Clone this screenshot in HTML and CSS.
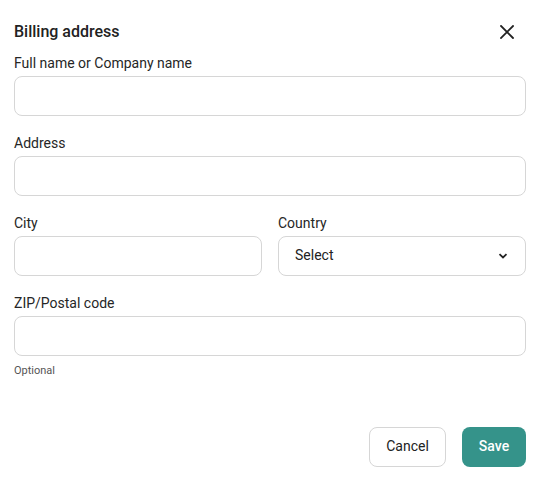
FILE: index.html
```html
<!DOCTYPE html>
<html>
<head>
<meta charset="utf-8">
<link rel="stylesheet" href="styles.css">
</head>
<body>
<div class="dialog">
  <div class="header">
    <h1 class="title">Billing address</h1>
    <button class="close" aria-label="Close">
      <svg width="14" height="14" viewBox="0 0 14 14"><path d="M1 1L13 13M13 1L1 13" stroke="#222" stroke-width="1.8" stroke-linecap="square"/></svg>
    </button>
  </div>
  <div class="form">
    <div class="field">
      <label class="label">Full name or Company name</label>
      <div class="input"></div>
    </div>
    <div class="field">
      <label class="label">Address</label>
      <div class="input"></div>
    </div>
    <div class="row">
      <div class="field">
        <label class="label">City</label>
        <div class="input"></div>
      </div>
      <div class="field">
        <label class="label">Country</label>
        <div class="input select">
          <span>Select</span>
          <svg width="10" height="6" viewBox="0 0 10 6"><path d="M1.5 1.2L5 4.5L8.5 1.2" fill="none" stroke="#222" stroke-width="1.8"/></svg>
        </div>
      </div>
    </div>
    <div class="field">
      <label class="label">ZIP/Postal code</label>
      <div class="input"></div>
      <div class="hint">Optional</div>
    </div>
  </div>
  <div class="actions">
    <button class="btn btn-secondary">Cancel</button>
    <button class="btn btn-primary">Save</button>
  </div>
</div>
</body>
</html>
```
FILE: styles.css
```css
* { box-sizing: border-box; }
html, body { margin: 0; padding: 0; background: #fff; }
body { font-family: Roboto, "Noto Sans", sans-serif; color: #222; }
.dialog { width: 539px; padding: 20px 13px 0 14px; }
.header { display: flex; justify-content: space-between; align-items: center; height: 24px; }
.title { margin: 0; font-size: 16px; font-weight: 500; line-height: 24px; color: #222; }
.close { border: 0; background: none; padding: 0; width: 14px; height: 14px; margin-right: 12px; display: flex; }
.form { display: flex; flex-direction: column; gap: 17px; margin-top: 9px; }
.field { display: flex; flex-direction: column; flex: 1; }
.label { font-size: 14px; line-height: 20px; margin-bottom: 3px; color: #262626; }
.input { height: 40px; border: 1px solid #d6d6d6; border-radius: 8px; background: #fff; }
.row { display: flex; gap: 16px; }
.select { display: flex; align-items: center; justify-content: space-between; padding: 0 17px 2px 16px; font-size: 14px; }
.select svg { margin-top: 2px; }
.hint { font-size: 11px; line-height: 14px; color: #555; margin-top: 8px; }
.actions { display: flex; justify-content: flex-end; gap: 16px; margin-top: 49px; }
.btn { height: 40px; border-radius: 8px; font-family: Roboto, sans-serif; font-size: 14px; padding: 0 16px 2px; }
.btn-secondary { background: #fff; border: 1px solid #d6d6d6; color: #222; width: 77px; }
.btn-primary { background: #35938a; border: 0; color: #fff; font-weight: 500; width: 64px; }
```
